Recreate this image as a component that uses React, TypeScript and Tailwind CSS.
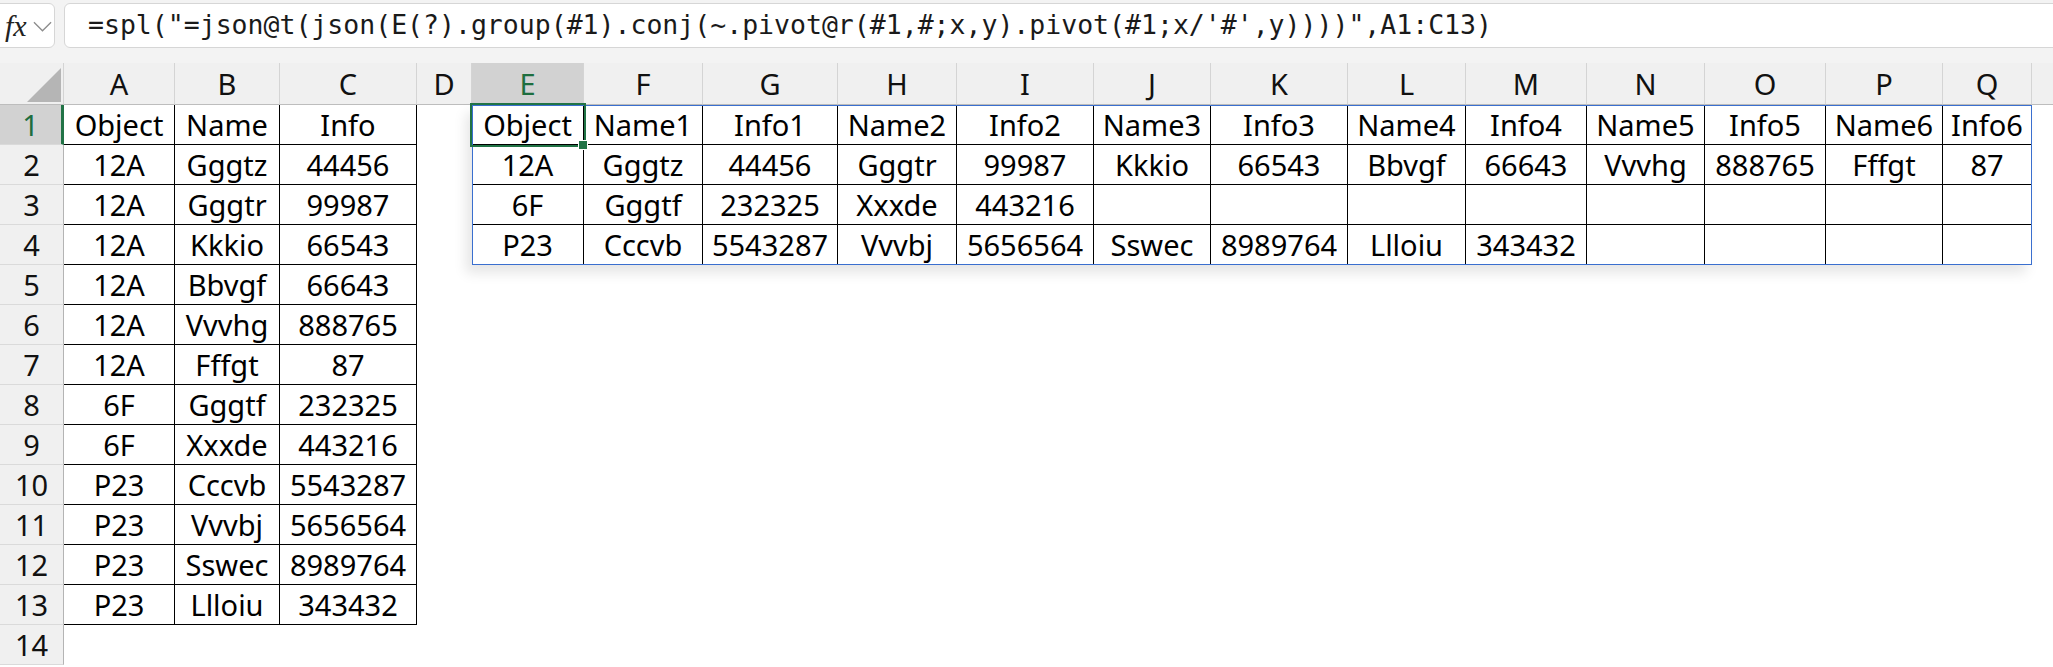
import type { ReactNode } from "react";

const FORMULA = `=spl("=json@t(json(E(?).group(#1).conj(~.pivot@r(#1,#;x,y).pivot(#1;x/'#',y))))",A1:C13)`;

const LETTERS = ["A", "B", "C", "D", "E", "F", "G", "H", "I", "J", "K", "L", "M", "N", "O", "P", "Q"];

const SOURCE = [
  ["Object", "Name", "Info"],
  ["12A", "Gggtz", "44456"],
  ["12A", "Gggtr", "99987"],
  ["12A", "Kkkio", "66543"],
  ["12A", "Bbvgf", "66643"],
  ["12A", "Vvvhg", "888765"],
  ["12A", "Fffgt", "87"],
  ["6F", "Gggtf", "232325"],
  ["6F", "Xxxde", "443216"],
  ["P23", "Cccvb", "5543287"],
  ["P23", "Vvvbj", "5656564"],
  ["P23", "Sswec", "8989764"],
  ["P23", "Llloiu", "343432"],
];

const SPILL = [
  ["Object", "Name1", "Info1", "Name2", "Info2", "Name3", "Info3", "Name4", "Info4", "Name5", "Info5", "Name6", "Info6"],
  ["12A", "Gggtz", "44456", "Gggtr", "99987", "Kkkio", "66543", "Bbvgf", "66643", "Vvvhg", "888765", "Fffgt", "87"],
  ["6F", "Gggtf", "232325", "Xxxde", "443216", "", "", "", "", "", "", "", ""],
  ["P23", "Cccvb", "5543287", "Vvvbj", "5656564", "Sswec", "8989764", "Llloiu", "343432", "", "", "", ""],
];

function cellValue(row: number, col: number): string {
  if (col <= 2 && row < SOURCE.length) return SOURCE[row][col];
  if (col >= 4 && row < SPILL.length) return SPILL[row][col - 4];
  return "";
}

function hasBorder(row: number, col: number) {
  return (col <= 2 && row < SOURCE.length) || (col >= 4 && row < SPILL.length);
}

function FormulaBar() {
  return (
    <div className="flex h-[63px] items-start gap-[9px] bg-[#f3f3f3] pt-[3px]">
      <div className="-ml-[8px] flex h-[45px] w-[63px] items-center gap-[6px] rounded-md border border-[#d6d6d6] bg-white pl-[12px]">
        <span className="font-['Liberation_Serif',serif] text-[30px] italic leading-none text-[#222]">fx</span>
        <svg width="19" height="12" viewBox="0 0 20 12" className="mt-[2px] shrink-0">
          <polyline points="1,1 10,10 19,1" fill="none" stroke="#8c8c8c" strokeWidth="1.4" />
        </svg>
      </div>
      <div className="-mr-4 flex h-[45px] flex-1 items-center rounded-md border border-[#d6d6d6] bg-white pl-[23px]">
        <span className="whitespace-pre font-['DejaVu_Sans_Mono',monospace] text-[26.5px] leading-none text-[#1a1a1a]">
          {FORMULA}
        </span>
      </div>
    </div>
  );
}

function Cell({ className, children }: { className: string; children?: ReactNode }) {
  return (
    <div className={`flex items-center justify-center overflow-hidden whitespace-nowrap ${className}`}>
      {children}
    </div>
  );
}

function Sheet() {
  const rows = Array.from({ length: 14 }, (_, i) => i);
  return (
    <div className="relative grid grid-cols-[64px_111px_105px_137px_55px_112px_119px_135px_119px_137px_117px_137px_118px_121px_118px_121px_117px_89px_1fr] grid-rows-[42px_repeat(14,40px)] text-[29px] leading-none">
      {/* column headers */}
      <Cell className="relative border-b border-r border-b-[#bdbdbd] border-r-[#d4d4d4] bg-[#f0f0f0]">
        <svg width="64" height="42" viewBox="0 0 64 42" className="absolute left-0 top-0">
          <polygon points="61,5 61,39 27,39" fill="#b5b5b5" />
        </svg>
      </Cell>
      {LETTERS.map((l) => (
        <Cell
          key={l}
          className={`border-b border-r border-b-[#bdbdbd] border-r-[#d4d4d4] ${
            l === "E" ? "bg-[#d2d2d2] text-[#1e6e3f]" : "bg-[#f0f0f0] text-[#111]"
          }`}
        >
          {l}
        </Cell>
      ))}
      <Cell className="border-b border-b-[#bdbdbd] bg-[#f0f0f0]" />

      {rows.map((r) => (
        <div key={r} className="contents">
          <Cell
            className={`border-b border-b-[#dadada] ${
              r === 0
                ? "border-r-[3px] border-r-[#217346] bg-[#d2d2d2] text-[#1e6e3f]"
                : "border-r border-r-[#b4b4b4] bg-[#f0f0f0] text-[#111]"
            }`}
          >
            {r + 1}
          </Cell>
          {LETTERS.map((l, c) => (
            <Cell
              key={l}
              className={`bg-white text-black ${hasBorder(r, c) ? "border-b border-r border-black" : ""}`}
            >
              {cellValue(r, c)}
            </Cell>
          ))}
          <Cell className="bg-white" />
        </div>
      ))}

      {/* spill range outline */}
      <div className="pointer-events-none absolute left-[472px] top-[42px] h-[160px] w-[1560px] border border-[#3a6fcf] shadow-[-6px_8px_12px_rgba(0,0,0,0.10)]" />
      {/* active cell E1 */}
      <div className="pointer-events-none absolute left-[470px] top-[40px] h-[44px] w-[116px] border-2 border-[#217346]" />
      <div className="pointer-events-none absolute left-[578px] top-[77px] h-[10px] w-[10px] border border-white bg-[#217346]" />
    </div>
  );
}

export default function App() {
  return (
    <div className="h-[667px] w-[2053px] overflow-hidden bg-white font-['Noto_Sans',sans-serif]">
      <FormulaBar />
      <Sheet />
    </div>
  );
}
